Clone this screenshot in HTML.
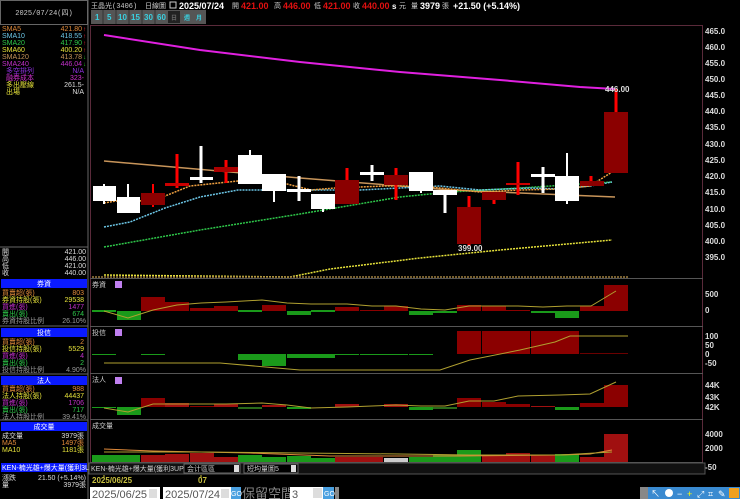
<!DOCTYPE html>
<html><head><meta charset="utf-8"><style>
html,body{margin:0;padding:0;background:#000;width:740px;height:499px;overflow:hidden}
svg{display:block}
text{font-family:"Liberation Sans","Noto Sans CJK TC",sans-serif}
.s{font-family:"Liberation Mono","Noto Sans CJK TC",monospace;font-size:7px}
.ax{font-size:8px;fill:#ddd;font-weight:bold}
</style></head><body>
<svg width="740" height="499" viewBox="0 0 740 499" xmlns="http://www.w3.org/2000/svg">
<rect width="740" height="499" fill="#000"/>
<!-- left panel frames -->
<rect x="0.5" y="0.5" width="87" height="24" fill="none" stroke="#666"/>
<text x="44" y="15" class="s" fill="#ccc" text-anchor="middle">2025/07/24(四)</text>
<line x1="88" y1="0" x2="88" y2="499" stroke="#666"/>
<g class="s">
<text x="2" y="31" fill="#e08a3a">SMA5</text><text x="82" y="31" fill="#e08a3a" text-anchor="end">421.80</text>
<text x="2" y="38" fill="#6cc6e6">SMA10</text><text x="82" y="38" fill="#6cc6e6" text-anchor="end">418.55</text>
<text x="2" y="45" fill="#2ec84a">SMA20</text><text x="82" y="45" fill="#2ec84a" text-anchor="end">417.90</text>
<text x="2" y="52" fill="#e6e23a">SMA60</text><text x="82" y="52" fill="#e6e23a" text-anchor="end">400.20</text>
<text x="2" y="59" fill="#c8955a">SMA120</text><text x="82" y="59" fill="#c8955a" text-anchor="end">413.78</text>
<text x="2" y="66" fill="#c030c8">SMA240</text><text x="82" y="66" fill="#c030c8" text-anchor="end">446.04</text>
<text x="6" y="73" fill="#9030e0">多空排列</text><text x="84" y="73" fill="#9030e0" text-anchor="end">N/A</text>
<text x="6" y="80" fill="#d030d0">融券成本</text><text x="84" y="80" fill="#d030d0" text-anchor="end">323-</text>
<text x="6" y="87" fill="#e6e23a">多出壓線</text><text x="84" y="87" fill="#ddd" text-anchor="end">261.5-</text>
<text x="6" y="94" fill="#e6e23a">出場</text><text x="84" y="94" fill="#ddd" text-anchor="end">N/A</text>
</g>
<g fill="#e23" font-size="6"><text x="83" y="31">↑</text><text x="83" y="38">↑</text><text x="83" y="45">↑</text><text x="83" y="52">↑</text></g>
<g fill="#2c2" font-size="6"><text x="83" y="59">↓</text><text x="83" y="66">↓</text></g>
<line x1="0" y1="247" x2="88" y2="247" stroke="#666"/>
<g class="s" fill="#ddd">
<text x="2" y="254">開</text><text x="86" y="254" text-anchor="end">421.00</text>
<text x="2" y="261">高</text><text x="86" y="261" text-anchor="end">446.00</text>
<text x="2" y="268">低</text><text x="86" y="268" text-anchor="end">421.00</text>
<text x="2" y="275">收</text><text x="86" y="275" text-anchor="end">440.00</text>
</g>
<!-- left blocks -->
<g class="s">
<rect x="1" y="279" width="86" height="9" fill="#0a1aff"/><text x="44" y="286" fill="#fff" text-anchor="middle">券資</text>
<text x="2" y="295" fill="#e08a3a">買賣超(張)</text><text x="84" y="295" fill="#e08a3a" text-anchor="end">803</text>
<text x="2" y="302" fill="#e6e23a">券資持股(張)</text><text x="84" y="302" fill="#e6e23a" text-anchor="end">29538</text>
<text x="2" y="309" fill="#c030c8">買進(張)</text><text x="84" y="309" fill="#c030c8" text-anchor="end">1477</text>
<text x="2" y="316" fill="#2ec84a">賣出(張)</text><text x="84" y="316" fill="#2ec84a" text-anchor="end">674</text>
<text x="2" y="323" fill="#999">券資持股比例</text><text x="86" y="323" fill="#999" text-anchor="end">26.10%</text>
<line x1="0" y1="326" x2="88" y2="326" stroke="#666"/>
<rect x="1" y="328" width="86" height="9" fill="#0a1aff"/><text x="44" y="335" fill="#fff" text-anchor="middle">投信</text>
<text x="2" y="344" fill="#e08a3a">買賣超(張)</text><text x="84" y="344" fill="#e08a3a" text-anchor="end">2</text>
<text x="2" y="351" fill="#e6e23a">投信持股(張)</text><text x="84" y="351" fill="#e6e23a" text-anchor="end">5529</text>
<text x="2" y="358" fill="#c030c8">買進(張)</text><text x="84" y="358" fill="#c030c8" text-anchor="end">4</text>
<text x="2" y="365" fill="#2ec84a">賣出(張)</text><text x="84" y="365" fill="#2ec84a" text-anchor="end">2</text>
<text x="2" y="372" fill="#999">投信持股比例</text><text x="86" y="372" fill="#999" text-anchor="end">4.90%</text>
<line x1="0" y1="374" x2="88" y2="374" stroke="#666"/>
<rect x="1" y="376" width="86" height="9" fill="#0a1aff"/><text x="44" y="383" fill="#fff" text-anchor="middle">法人</text>
<text x="2" y="391" fill="#e08a3a">買賣超(張)</text><text x="84" y="391" fill="#e08a3a" text-anchor="end">988</text>
<text x="2" y="398" fill="#e6e23a">法人持股(張)</text><text x="84" y="398" fill="#e6e23a" text-anchor="end">44437</text>
<text x="2" y="405" fill="#c030c8">買進(張)</text><text x="84" y="405" fill="#c030c8" text-anchor="end">1706</text>
<text x="2" y="412" fill="#2ec84a">賣出(張)</text><text x="84" y="412" fill="#2ec84a" text-anchor="end">717</text>
<text x="2" y="419" fill="#999">法人持股比例</text><text x="86" y="419" fill="#999" text-anchor="end">39.41%</text>
<line x1="0" y1="420" x2="88" y2="420" stroke="#666"/>
<rect x="1" y="422" width="86" height="9" fill="#0a1aff"/><text x="44" y="429" fill="#fff" text-anchor="middle">成交量</text>
<text x="2" y="438" fill="#ddd">成交量</text><text x="84" y="438" fill="#ddd" text-anchor="end">3979張</text>
<text x="2" y="445" fill="#e08a3a">MA5</text><text x="84" y="445" fill="#e08a3a" text-anchor="end">1497張</text>
<text x="2" y="452" fill="#e6e23a">MA10</text><text x="84" y="452" fill="#e6e23a" text-anchor="end">1181張</text>
<rect x="1" y="463" width="86" height="9" fill="#0a1aff"/><text x="2" y="470" fill="#fff">KEN-楠光雄+爆大量(獲利3UP)</text>
<text x="2" y="480" fill="#ddd">漲跌</text><text x="86" y="480" fill="#ddd" text-anchor="end">21.50 (+5.14%)</text>
<text x="2" y="487" fill="#ddd">量</text><text x="86" y="487" fill="#ddd" text-anchor="end">3979張</text>
</g>
<!-- header -->
<g font-size="8">
<text x="91" y="8" class="s" fill="#ccc">王晶光(3406)</text>
<text x="145" y="8" class="s" fill="#ccc">日線圖</text>
<rect x="170" y="2" width="6" height="6" fill="none" stroke="#ccc"/>
<text x="179" y="9" fill="#fff" font-weight="bold" font-size="9">2025/07/24</text>
<text x="232" y="8" class="s" fill="#ccc">開</text><text x="241" y="9" fill="#e01010" font-weight="bold" font-size="9">421.00</text>
<text x="274" y="8" class="s" fill="#ccc">高</text><text x="283" y="9" fill="#e01010" font-weight="bold" font-size="9">446.00</text>
<text x="314" y="8" class="s" fill="#ccc">低</text><text x="323" y="9" fill="#e01010" font-weight="bold" font-size="9">421.00</text>
<text x="353" y="8" class="s" fill="#ccc">收</text><text x="362" y="9" fill="#e01010" font-weight="bold" font-size="9">440.00</text>
<text x="392" y="9" fill="#fff" font-weight="bold" font-size="8">s</text><text x="399" y="8" class="s" fill="#ccc">元</text>
<text x="411" y="8" class="s" fill="#ccc">量</text><text x="420" y="9" fill="#fff" font-weight="bold" font-size="9">3979</text>
<text x="442" y="8" class="s" fill="#ccc">張</text>
<text x="453" y="9" fill="#fff" font-weight="bold" font-size="9">+21.50 (+5.14%)</text>
</g>
<g font-size="8" fill="#3ad0e0" font-weight="bold">
<rect x="91" y="10" width="115" height="14" fill="#555"/>
<rect x="168" y="11" width="12" height="12" fill="#222"/>
<line x1="103" y1="10" x2="103" y2="24" stroke="#333"/><line x1="116" y1="10" x2="116" y2="24" stroke="#333"/><line x1="129" y1="10" x2="129" y2="24" stroke="#333"/><line x1="142" y1="10" x2="142" y2="24" stroke="#333"/><line x1="155" y1="10" x2="155" y2="24" stroke="#333"/>
<text x="95" y="20">1</text><text x="107" y="20">5</text><text x="118" y="20">10</text><text x="131" y="20">15</text><text x="144" y="20">30</text><text x="157" y="20">60</text>
<text x="171" y="20" font-size="6" fill="#666">日</text><text x="184" y="20" font-size="6">週</text><text x="196" y="20" font-size="6">月</text>
</g>
<!-- chart frame -->
<rect x="90.5" y="25.5" width="612" height="437" fill="none" stroke="#5a2a3a"/>
<g stroke="#555"><line x1="90" y1="278.5" x2="703" y2="278.5"/><line x1="90" y1="326.5" x2="703" y2="326.5"/><line x1="90" y1="373.5" x2="703" y2="373.5"/><line x1="90" y1="419.5" x2="703" y2="419.5"/><line x1="90" y1="462.5" x2="703" y2="462.5"/></g>
<g class="ax">
<text x="705" y="34">465.0</text><text x="705" y="50">460.0</text><text x="705" y="66">455.0</text><text x="705" y="82">450.0</text><text x="705" y="98">445.0</text><text x="705" y="114">440.0</text><text x="705" y="130">435.0</text><text x="705" y="147">430.0</text><text x="705" y="163">425.0</text><text x="705" y="179">420.0</text><text x="705" y="195">415.0</text><text x="705" y="212">410.0</text><text x="705" y="228">405.0</text><text x="705" y="244">400.0</text><text x="705" y="260">395.0</text>
<text x="705" y="297">500</text><text x="705" y="313">0</text>
<text x="705" y="339">100</text><text x="705" y="348">50</text><text x="705" y="357">0</text><text x="705" y="366">-50</text>
<text x="705" y="388">44K</text><text x="705" y="400">43K</text><text x="705" y="410">42K</text>
<text x="705" y="437">4000</text><text x="705" y="451">2000</text><text x="705" y="470">-50</text>
</g>
<!-- MA lines -->
<polyline points="104,35 200,50 300,62 400,72 500,80 580,87 615,89" fill="none" stroke="#e020e0" stroke-width="2"/>
<polyline points="104,161 300,178 450,190 615,197" fill="none" stroke="#c8955a" stroke-width="1.5"/>
<polyline points="104,275 290,277 330,269 420,258 500,250 612,240" fill="none" stroke="#e6e23a" stroke-width="1.5" stroke-dasharray="2,1"/>
<polyline points="104,247 200,230 300,214 400,197 450,192 520,188 612,182" fill="none" stroke="#2ec84a" stroke-width="1.5" stroke-dasharray="2,1"/>
<polyline points="104,227 130,222 165,208 200,197 238,190 262,190 311,190 360,190 400,188 440,186 480,190 530,188 560,189 590,186 612,182" fill="none" stroke="#6cc6e6" stroke-width="1.5" stroke-dasharray="2,1"/>
<polyline points="104,203 116,201 140,201 165,196 190,186 238,181 262,179 287,184 311,190 335,188 384,186 420,186 450,189 480,192 520,190 560,189 590,186 612,172" fill="none" stroke="#f0a040" stroke-width="1.5" stroke-dasharray="2,1"/>
<line x1="92" y1="277" x2="628" y2="277" stroke="#a08040" stroke-dasharray="2,1" stroke-width="1.5"/>
<!-- candles -->
<g>
<line x1="104" y1="184" x2="104" y2="204" stroke="#fff" stroke-width="2"/><rect x="93" y="186" width="23" height="15" fill="#fff"/>
<line x1="128" y1="184" x2="128" y2="213" stroke="#fff" stroke-width="2"/><rect x="117" y="197" width="23" height="16" fill="#fff"/>
<line x1="153" y1="184" x2="153" y2="207" stroke="#f00" stroke-width="2"/><rect x="141" y="193" width="24" height="12" fill="#8b0000"/>
<line x1="177" y1="154" x2="177" y2="188" stroke="#f00" stroke-width="3"/><rect x="165" y="183" width="24" height="3" fill="#c00"/>
<line x1="201" y1="146" x2="201" y2="183" stroke="#fff" stroke-width="3"/><rect x="190" y="177" width="23" height="3" fill="#fff"/>
<line x1="226" y1="160" x2="226" y2="183" stroke="#f00" stroke-width="3"/><rect x="214" y="167" width="24" height="5" fill="#a00"/>
<line x1="250" y1="150" x2="250" y2="184" stroke="#fff" stroke-width="2"/><rect x="238" y="155" width="24" height="29" fill="#fff"/>
<line x1="274" y1="174" x2="274" y2="202" stroke="#fff" stroke-width="2"/><rect x="262" y="174" width="24" height="17" fill="#fff"/>
<line x1="299" y1="176" x2="299" y2="201" stroke="#fff" stroke-width="3"/><rect x="287" y="189" width="24" height="3" fill="#fff"/>
<line x1="323" y1="194" x2="323" y2="212" stroke="#fff" stroke-width="2"/><rect x="311" y="194" width="24" height="15" fill="#fff"/>
<line x1="347" y1="168" x2="347" y2="204" stroke="#f00" stroke-width="3"/><rect x="335" y="180" width="24" height="24" fill="#8b0000"/>
<line x1="372" y1="165" x2="372" y2="181" stroke="#fff" stroke-width="3"/><rect x="360" y="172" width="24" height="3" fill="#fff"/>
<line x1="396" y1="168" x2="396" y2="200" stroke="#f00" stroke-width="3"/><rect x="384" y="175" width="24" height="10" fill="#8b0000"/>
<line x1="421" y1="172" x2="421" y2="193" stroke="#fff" stroke-width="2"/><rect x="409" y="172" width="24" height="19" fill="#fff"/>
<line x1="445" y1="190" x2="445" y2="213" stroke="#fff" stroke-width="3"/><rect x="433" y="190" width="24" height="5" fill="#fff"/>
<line x1="469" y1="196" x2="469" y2="246" stroke="#f00" stroke-width="3"/><rect x="457" y="207" width="24" height="37" fill="#8b0000"/>
<line x1="494" y1="192" x2="494" y2="204" stroke="#f00" stroke-width="3"/><rect x="482" y="192" width="24" height="8" fill="#8b0000"/>
<line x1="518" y1="162" x2="518" y2="195" stroke="#f00" stroke-width="3"/><rect x="506" y="183" width="24" height="2" fill="#c00"/>
<line x1="543" y1="167" x2="543" y2="193" stroke="#fff" stroke-width="3"/><rect x="531" y="174" width="24" height="3" fill="#fff"/>
<line x1="567" y1="153" x2="567" y2="204" stroke="#fff" stroke-width="2"/><rect x="555" y="176" width="24" height="25" fill="#fff"/>
<line x1="591" y1="176" x2="591" y2="186" stroke="#f00" stroke-width="3"/><rect x="580" y="181" width="24" height="5" fill="#8b0000"/>
<line x1="616" y1="89" x2="616" y2="112" stroke="#f00" stroke-width="3"/><rect x="604" y="112" width="24" height="61" fill="#8b0000"/>
</g>
<text x="458" y="251" font-size="8" fill="#ddd" font-weight="bold">399.00</text>
<text x="605" y="92" font-size="8" fill="#ddd" font-weight="bold">446.00</text>
<!-- subpanel labels -->
<g class="s" fill="#ccc"><text x="92" y="287">券資</text><text x="92" y="335">投信</text><text x="92" y="382">法人</text><text x="92" y="428">成交量</text></g>
<g fill="#c080f0"><rect x="115" y="281" width="7" height="7"/><rect x="115" y="329" width="7" height="7"/><rect x="115" y="377" width="7" height="7"/></g>
<!-- panel1 -->
<g>
<rect x="92" y="310" width="24" height="2" fill="#1a9a1a"/>
<rect x="117" y="311" width="24" height="9" fill="#1a9a1a"/>
<rect x="141" y="297" width="24" height="14" fill="#8b0000"/>
<rect x="165" y="302" width="24" height="9" fill="#8b0000"/>
<rect x="190" y="308" width="24" height="3" fill="#8b0000"/>
<rect x="214" y="306" width="24" height="5" fill="#8b0000"/>
<rect x="238" y="310" width="24" height="2" fill="#1a9a1a"/>
<rect x="262" y="305" width="24" height="6" fill="#8b0000"/>
<rect x="287" y="311" width="24" height="4" fill="#1a9a1a"/>
<rect x="311" y="310" width="24" height="2" fill="#1a9a1a"/>
<rect x="335" y="307" width="24" height="4" fill="#8b0000"/>
<rect x="360" y="310" width="24" height="1" fill="#8b0000"/>
<rect x="384" y="306" width="24" height="5" fill="#8b0000"/>
<rect x="409" y="311" width="24" height="4" fill="#1a9a1a"/>
<rect x="433" y="311" width="24" height="2" fill="#1a9a1a"/>
<rect x="457" y="305" width="24" height="6" fill="#8b0000"/>
<rect x="482" y="306" width="24" height="5" fill="#8b0000"/>
<rect x="506" y="310" width="24" height="1" fill="#8b0000"/>
<rect x="531" y="311" width="24" height="2" fill="#1a9a1a"/>
<rect x="555" y="311" width="24" height="7" fill="#1a9a1a"/>
<rect x="580" y="306" width="24" height="5" fill="#8b0000"/>
<rect x="604" y="285" width="24" height="26" fill="#8b0000"/>
<polyline points="104,311 128,318 153,310 177,305 201,303 226,302 262,300 287,303 311,304 347,304 372,306 396,306 421,309 445,310 469,306 494,306 518,306 543,307 567,306 591,306 616,291" fill="none" stroke="#b0a030" stroke-width="1"/>
</g>
<!-- panel2 -->
<g>
<rect x="92" y="354" width="24" height="1" fill="#1a9a1a"/><rect x="141" y="354" width="24" height="1" fill="#1a9a1a"/>
<rect x="238" y="354" width="24" height="6" fill="#1a9a1a"/>
<rect x="262" y="354" width="24" height="12" fill="#1a9a1a"/>
<rect x="287" y="354" width="24" height="4" fill="#1a9a1a"/>
<rect x="311" y="354" width="24" height="4" fill="#1a9a1a"/>
<rect x="335" y="354" width="24" height="1" fill="#1a9a1a"/><rect x="360" y="354" width="24" height="1" fill="#1a9a1a"/><rect x="384" y="354" width="24" height="1" fill="#1a9a1a"/><rect x="409" y="354" width="24" height="1" fill="#1a9a1a"/>
<rect x="457" y="331" width="24" height="23" fill="#8b0000"/>
<rect x="482" y="331" width="24" height="23" fill="#8b0000"/>
<rect x="506" y="331" width="24" height="23" fill="#8b0000"/>
<rect x="531" y="331" width="24" height="23" fill="#8b0000"/>
<rect x="555" y="331" width="24" height="23" fill="#8b0000"/>
<rect x="580" y="353" width="48" height="1" fill="#6a0000"/>
<polyline points="104,363 220,363 300,370 440,370 470,360 520,350 555,342 570,336 628,336" fill="none" stroke="#b0a030" stroke-width="1"/>
</g>
<!-- panel3 -->
<g>
<rect x="92" y="407" width="24" height="1" fill="#1a9a1a"/>
<rect x="117" y="407" width="24" height="8" fill="#1a9a1a"/>
<rect x="141" y="398" width="24" height="9" fill="#8b0000"/>
<rect x="165" y="403" width="24" height="4" fill="#a01010"/>
<rect x="190" y="406" width="24" height="1" fill="#8b0000"/>
<rect x="214" y="404" width="24" height="3" fill="#a01010"/>
<rect x="238" y="407" width="24" height="2" fill="#2a6a1a"/>
<rect x="262" y="405" width="24" height="2" fill="#a01010"/>
<rect x="287" y="407" width="24" height="2" fill="#1a9a1a"/>
<rect x="335" y="404" width="24" height="3" fill="#a01010"/>
<rect x="384" y="404" width="24" height="3" fill="#a01010"/>
<rect x="409" y="407" width="24" height="3" fill="#1a9a1a"/>
<rect x="433" y="407" width="24" height="2" fill="#2a6a1a"/>
<rect x="457" y="398" width="24" height="9" fill="#8b0000"/>
<rect x="482" y="402" width="24" height="5" fill="#8b0000"/>
<rect x="506" y="404" width="24" height="3" fill="#8b0000"/>
<rect x="531" y="406" width="24" height="1" fill="#a01010"/>
<rect x="555" y="407" width="24" height="3" fill="#1a9a1a"/>
<rect x="580" y="403" width="24" height="4" fill="#8b0000"/>
<rect x="604" y="385" width="24" height="22" fill="#8b0000"/>
<polyline points="104,408 128,412 153,404 177,404 226,404 262,403 287,405 311,408 347,407 372,406 396,405 421,406 445,406 469,401 494,401 518,396 560,395 590,394 616,382" fill="none" stroke="#b0a030" stroke-width="1"/>
</g>
<!-- panel4 -->
<g>
<rect x="92" y="455" width="48" height="7" fill="#1a9a1a"/>
<rect x="141" y="455" width="24" height="7" fill="#a01010"/>
<rect x="165" y="454" width="24" height="8" fill="#a01010"/>
<rect x="190" y="453" width="24" height="9" fill="#a01010"/>
<rect x="214" y="457" width="24" height="5" fill="#a01010"/>
<rect x="238" y="455" width="24" height="7" fill="#1a9a1a"/>
<rect x="262" y="457" width="24" height="5" fill="#1a9a1a"/>
<rect x="287" y="456" width="24" height="6" fill="#1a9a1a"/>
<rect x="311" y="458" width="24" height="4" fill="#1a9a1a"/>
<rect x="335" y="457" width="48" height="5" fill="#a01010"/>
<rect x="384" y="458" width="24" height="4" fill="#ccc"/>
<rect x="409" y="457" width="24" height="5" fill="#1a9a1a"/>
<rect x="433" y="455" width="24" height="7" fill="#1a9a1a"/>
<rect x="457" y="450" width="24" height="12" fill="#1a9a1a"/>
<rect x="482" y="455" width="24" height="7" fill="#a01010"/>
<rect x="506" y="453" width="24" height="9" fill="#a01010"/>
<rect x="531" y="455" width="24" height="7" fill="#a01010"/>
<rect x="555" y="454" width="24" height="8" fill="#1a9a1a"/>
<rect x="580" y="457" width="24" height="5" fill="#a01010"/>
<rect x="604" y="434" width="24" height="28" fill="#a01010"/>
<polyline points="104,449 153,451 250,453 330,456 400,456 460,456 560,455 590,454 612,450" fill="none" stroke="#e08a3a" stroke-width="1"/>
<polyline points="104,452 200,452 300,453 400,454 470,455 560,455 612,452" fill="none" stroke="#b0a030" stroke-width="1"/>
</g>
<!-- bottom bar -->
<rect x="89" y="463" width="616" height="11" fill="#111" stroke="#555"/>
<g class="s" fill="#ccc">
<text x="91" y="471">KEN-楠光雄+爆大量(獲利3UP)</text>
<rect x="184" y="464" width="56" height="9" fill="#000" stroke="#666"/><text x="187" y="471">会计區區</text>
<rect x="234" y="465" width="5" height="7" fill="#ddd"/>
<rect x="244" y="464" width="54" height="9" fill="#000" stroke="#666"/><text x="247" y="471">短均量圖5</text>
<rect x="291" y="465" width="5" height="7" fill="#ddd"/>
</g>
<text x="92" y="483" font-size="8" fill="#c8c040" font-weight="bold">2025/06/25</text>
<line x1="104" y1="475" x2="104" y2="478" stroke="#c8c040"/>
<text x="198" y="483" font-size="8" fill="#c8c040" font-weight="bold">07</text>
<line x1="201" y1="475" x2="201" y2="478" stroke="#c8c040"/>
<!-- controls -->
<rect x="90" y="487" width="70" height="12" fill="#fff"/><text x="92" y="498" font-size="11" fill="#555">2025/06/25</text>
<rect x="149" y="489" width="8" height="9" fill="#ddd"/>
<text x="165" y="497" font-size="9" fill="#ccc">~</text>
<rect x="163" y="487" width="70" height="12" fill="#fff"/><text x="165" y="498" font-size="11" fill="#555">2025/07/24</text>
<rect x="221" y="489" width="8" height="9" fill="#ddd"/>
<rect x="231" y="487" width="10" height="12" fill="#4aa0e0"/><text x="231" y="496" font-size="7" fill="#fff">GO</text>
<text x="242" y="498" font-size="13" fill="#888" font-family="Noto Sans CJK TC,sans-serif">保留空間</text>
<rect x="290" y="487" width="33" height="12" fill="#fff"/><text x="292" y="498" font-size="11" fill="#555">3</text>
<rect x="313" y="488" width="9" height="10" fill="#ddd"/>
<rect x="323" y="487" width="11" height="12" fill="#4aa0e0"/><text x="324" y="496" font-size="7" fill="#fff">GO</text>
<rect x="335" y="487" width="4" height="12" fill="#888"/>
<rect x="640" y="487" width="100" height="12" fill="#3a8ad0"/>
<rect x="640" y="487" width="8" height="12" fill="#888"/>
<g fill="#fff" font-size="9"><text x="651" y="497">↖</text><circle cx="669" cy="493" r="4"/><text x="677" y="497">−</text><text x="687" y="497" fill="#ff0">+</text><text x="697" y="497">⤢</text><text x="708" y="497">⌗</text><text x="718" y="497">✎</text></g>
<rect x="729" y="488" width="10" height="10" fill="#f0a020"/>
</svg>
</body></html>
